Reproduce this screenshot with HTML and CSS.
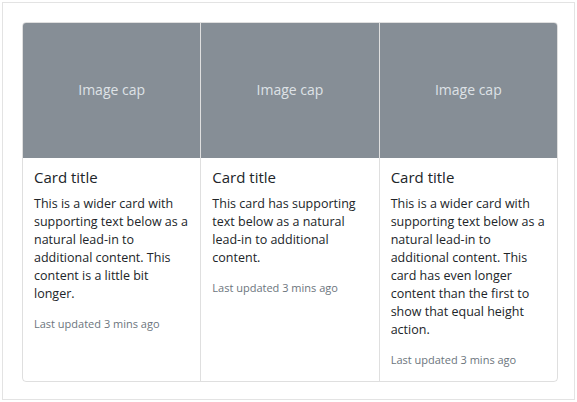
FILE: index.html
```html
<!DOCTYPE html>
<html>
<head>
<meta charset="utf-8">
<link rel="stylesheet" href="styles.css">
</head>
<body>
<div class="example">
  <div class="card-group">
    <div class="card">
      <div class="img-cap"><span>Image cap</span></div>
      <div class="card-body">
        <h5 class="card-title">Card title</h5>
        <p class="card-text">This is a wider card with supporting text below as a natural lead-in to additional content. This content is a little bit longer.</p>
        <p class="card-text"><small class="muted">Last updated 3 mins ago</small></p>
      </div>
    </div>
    <div class="card">
      <div class="img-cap"><span>Image cap</span></div>
      <div class="card-body">
        <h5 class="card-title">Card title</h5>
        <p class="card-text">This card has supporting text below as a natural lead-in to additional content.</p>
        <p class="card-text"><small class="muted">Last updated 3 mins ago</small></p>
      </div>
    </div>
    <div class="card">
      <div class="img-cap"><span>Image cap</span></div>
      <div class="card-body">
        <h5 class="card-title">Card title</h5>
        <p class="card-text">This is a wider card with supporting text below as a natural lead-in to additional content. This card has even longer content than the first to show that equal height action.</p>
        <p class="card-text"><small class="muted">Last updated 3 mins ago</small></p>
      </div>
    </div>
  </div>
</div>
</body>
</html>
```
FILE: styles.css
```css
* { box-sizing: border-box; }
html, body { margin: 0; padding: 0; background: #fff; }
body {
  font-family: "Open Sans", "Noto Sans", sans-serif;
  font-size: 12.5px;
  line-height: 18px;
  color: #212529;
}
.example {
  margin: 2px;
  border: 1px solid #e3e3e3;
  padding: 19px 16px 17px 19px;
}
.card-group {
  display: flex;
  border: 1px solid rgba(0,0,0,.125);
  border-radius: 4px;
  overflow: hidden;
}
.card {
  flex: 1 1 0;
  display: flex;
  flex-direction: column;
  min-width: 0;
}
.card + .card { border-left: 1px solid rgba(0,0,0,.125); }
.img-cap {
  height: 135px;
  background: #868e96;
  color: #dee2e6;
  display: flex;
  align-items: center;
  justify-content: center;
  font-size: 14px;
  padding-bottom: 2px;
}
.card-body { padding: 10px 12px 12px 11px; flex: 1; }
.card-title {
  margin: 0 0 9px;
  font-size: 15px;
  line-height: 18px;
  font-weight: 400;
}
.card-text { margin: 0 0 12px; }
.card-text:last-child { margin-bottom: 0; }
.muted { color: #6c757d; font-size: 11px; }
```
